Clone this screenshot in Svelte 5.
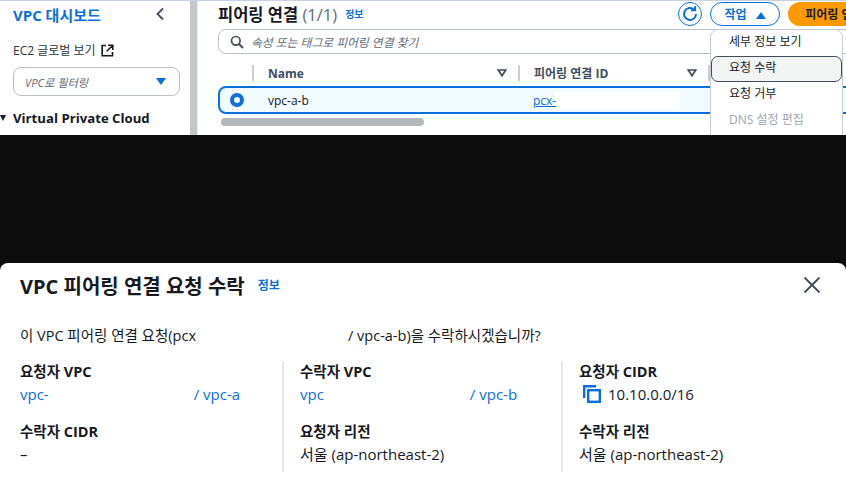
<script lang="ts">
	const modalColumns = [
		[
			{ label: '요청자 VPC', link: 'vpc-', tail: '/ vpc-a', gap: 145 },
			{ label: '수락자 CIDR', value: '–' }
		],
		[
			{ label: '수락자 VPC', link: 'vpc', tail: '/ vpc-b', gap: 146 },
			{ label: '요청자 리전', value: '서울 (ap-northeast-2)' }
		],
		[
			{ label: '요청자 CIDR', value: '10.10.0.0/16', copy: true },
			{ label: '수락자 리전', value: '서울 (ap-northeast-2)' }
		]
	];
</script>

<div class="page">
	<div class="console">
		<aside class="sidebar">
			<div class="side-head">
				<span class="side-title">VPC 대시보드</span>
				<svg class="chevron" width="12" height="14" viewBox="0 0 12 14"><path d="M9 1.5 3.5 7 9 12.5" fill="none" stroke="#414d5c" stroke-width="1.8"/></svg>
			</div>
			<div class="side-link">
				EC2 글로벌 보기
				<svg width="13" height="13" viewBox="0 0 13 13"><path d="M5 1.5H1.2v10.3h10.3V8M7 1.2h4.8V6M11.5 1.5 5.8 7.2" fill="none" stroke="#16191f" stroke-width="1.6"/></svg>
			</div>
			<div class="side-filter">
				<span>VPC로 필터링</span>
				<i class="caret"></i>
			</div>
			<div class="side-group"><i class="group-caret"></i>Virtual Private Cloud</div>
		</aside>
		<div class="divider"></div>
		<main class="content">
			<div class="toolbar">
				<h2>피어링 연결 <span class="count">(1/1)</span></h2>
				<a class="info" href="#info">정보</a>
				<div class="actions">
					<button class="refresh" aria-label="새로 고침">
						<svg width="18" height="18" viewBox="0 0 18 18"><path d="M15 9a6 6 0 1 1-2-4.5" fill="none" stroke="#0a6fdc" stroke-width="2"/><path d="M14 1.2v4H10" fill="none" stroke="#0a6fdc" stroke-width="2"/></svg>
					</button>
					<button class="action">작업 <i class="up"></i></button>
					<button class="create">피어링 연결 생성</button>
				</div>
			</div>
			<div class="search">
				<svg width="14" height="14" viewBox="0 0 14 14"><circle cx="5.8" cy="5.8" r="4.3" fill="none" stroke="#414d5c" stroke-width="1.7"/><path d="m9 9 4 4" stroke="#414d5c" stroke-width="1.9"/></svg>
				<span>속성 또는 태그로 피어링 연결 찾기</span>
			</div>
			<div class="thead">
				<span class="sep first"></span>
				<span class="th name">Name</span>
				<svg class="sort" width="10" height="8" viewBox="0 0 10 8"><path d="M1.2 1h7.6L5 6.8z" fill="#e9ebed" stroke="#414d5c" stroke-width="1.6"/></svg>
				<span class="sep"></span>
				<span class="th pid">피어링 연결 ID</span>
				<svg class="sort" width="10" height="8" viewBox="0 0 10 8"><path d="M1.2 1h7.6L5 6.8z" fill="#e9ebed" stroke="#414d5c" stroke-width="1.6"/></svg>
				<span class="sep"></span>
			</div>
			<div class="row">
				<span class="radio"></span>
				<span class="cell-name">vpc-a-b</span>
				<a class="cell-id" href="#pcx">pcx-</a>
			</div>
			<div class="scroll"><div class="thumb"></div></div>
			<ul class="menu">
				<li>세부 정보 보기</li>
				<li class="hover">요청 수락</li>
				<li>요청 거부</li>
				<li class="off">DNS 설정 편집</li>
			</ul>
		</main>
	</div>

	<div class="band"></div>

	<section class="modal">
		<header class="modal-head">
			<h1>VPC 피어링 연결 요청 수락</h1>
			<a class="info" href="#info">정보</a>
			<svg class="close" width="20" height="20" viewBox="0 0 20 20"><path d="m2.5 2.5 15 15m0-15-15 15" stroke="#414d5c" stroke-width="1.8"/></svg>
		</header>
		<p class="question">이 VPC 피어링 연결 요청(pcx<span class="hidden-id"></span>/ vpc-a-b)을 수락하시겠습니까?</p>
		<div class="columns">
			{#each modalColumns as column}
				<div class="column">
					{#each column as item}
						<div class="field">
							<div class="label">{item.label}</div>
							{#if item.link}
								<div class="value link">{item.link}<span style="width: {item.gap}px" class="blank"></span>{item.tail}</div>
							{:else}
								<div class="value">
									{#if item.copy}
										<svg class="copy" width="18" height="18" viewBox="0 0 18 18"><path d="M1.2 13V1.2H13" fill="none" stroke="#0a6fdc" stroke-width="2.4"/><rect x="5.2" y="5.2" width="11.6" height="11.6" fill="none" stroke="#0a6fdc" stroke-width="2.4"/></svg>
									{/if}
									{item.value}
								</div>
							{/if}
						</div>
					{/each}
				</div>
			{/each}
		</div>
	</section>
</div>

<style>
	:global(body) {
		margin: 0;
		background: #0c0c0c;
	}

	.page {
		width: 846px;
		height: 480px;
		overflow: hidden;
		display: flex;
		flex-direction: column;
		font-family: 'Open Sans', 'Noto Sans CJK KR', sans-serif;
		color: #16191f;
	}

	.console {
		height: 135px;
		flex-shrink: 0;
		display: flex;
		background: #fff;
		border-top: 1px solid #c6d3e6;
		box-sizing: border-box;
		overflow: hidden;
	}

	.sidebar {
		width: 190px;
		flex-shrink: 0;
		box-sizing: border-box;
		padding: 2px 0 0 13px;
	}

	.side-head {
		display: flex;
		align-items: center;
		justify-content: space-between;
		padding-right: 24px;
		height: 22px;
	}

	.side-title {
		font-size: 15px;
		font-weight: 700;
		color: #0a6fdc;
	}

	.side-link {
		display: flex;
		align-items: center;
		gap: 5px;
		margin-top: 16px;
		font-size: 12px;
		height: 18px;
		color: #2b3440;
	}

	.side-filter {
		box-sizing: border-box;
		width: 167px;
		height: 29px;
		margin-top: 8px;
		border: 1px solid #b8bec6;
		border-radius: 8px;
		display: flex;
		align-items: center;
		justify-content: space-between;
		padding: 0 13px 0 11px;
		font-size: 11.2px;
		font-style: italic;
		color: #5f6b7a;
	}

	.caret {
		width: 0;
		height: 0;
		border-left: 5px solid transparent;
		border-right: 5px solid transparent;
		border-top: 7px solid #0a6fdc;
	}

	.side-group {
		display: flex;
		align-items: center;
		margin: 13px 0 0 -13px;
		font-size: 13.2px;
		font-weight: 700;
		white-space: nowrap;
	}

	.group-caret {
		width: 0;
		height: 0;
		border-left: 3px solid transparent;
		border-right: 3px solid transparent;
		border-top: 6px solid #16191f;
		margin-right: 7px;
	}

	.divider {
		width: 7px;
		flex-shrink: 0;
		background: #c4c7c9;
	}

	.content {
		position: relative;
		flex: 1;
		min-width: 0;
		box-sizing: border-box;
		padding-left: 20px;
		border-left: 1px solid #eaeded;
		overflow: hidden;
	}

	.toolbar {
		display: flex;
		align-items: center;
		height: 25px;
		white-space: nowrap;
	}

	h2 {
		margin: 0;
		font-size: 16.5px;
		font-weight: 700;
	}

	.count {
		font-weight: 400;
		color: #5f6b7a;
	}

	.info {
		margin-left: 8px;
		font-size: 10px;
		font-weight: 700;
		color: #0a6fdc;
		text-decoration: none;
	}

	.actions {
		margin-left: auto;
		display: flex;
		align-items: center;
		gap: 8px;
		margin-right: -60px;
	}

	.actions button {
		font-family: inherit;
		font-size: 12px;
		font-weight: 700;
		height: 24px;
		border-radius: 12px;
		white-space: nowrap;
		padding: 0;
	}

	.actions .refresh {
		width: 24px;
		border: 1.5px solid #0a6fdc;
		background: #fff;
		display: flex;
		align-items: center;
		justify-content: center;
	}

	.action {
		width: 70px;
		border: 1.5px solid #0a6fdc;
		background: #fff;
		color: #0a6fdc;
	}

	.up {
		display: inline-block;
		margin-left: 6px;
		width: 0;
		height: 0;
		border-left: 5px solid transparent;
		border-right: 5px solid transparent;
		border-bottom: 7px solid #0a6fdc;
	}

	.create {
		width: 118px;
		border: 0;
		background: #ff9900;
		color: #16191f;
	}

	.search {
		box-sizing: border-box;
		height: 25px;
		margin: 3px -30px 0 0;
		border: 1px solid #b8bec6;
		border-radius: 8px;
		display: flex;
		align-items: center;
		gap: 7px;
		padding-left: 11px;
		font-size: 11.8px;
		font-style: italic;
		color: #5f6b7a;
	}

	.thead {
		display: flex;
		align-items: center;
		box-sizing: border-box;
		height: 32px;
		padding-top: 6px;
		white-space: nowrap;
		font-size: 12px;
		font-weight: 700;
		color: #414d5c;
	}

	.sep {
		width: 2px;
		height: 16px;
		background: #c8cdd3;
	}

	.sep.first {
		margin-left: 34px;
	}

	.th.name {
		width: 229px;
		margin-left: 14px;
	}

	.th.pid {
		width: 153px;
		margin-left: 14px;
	}

	.sort {
		margin-right: 11px;
	}

	.row {
		box-sizing: border-box;
		height: 28px;
		margin-right: -30px;
		border: 2px solid #0a6fdc;
		border-radius: 8px 0 0 8px;
		background: #f1faff;
		display: flex;
		align-items: center;
		font-size: 12px;
		white-space: nowrap;
	}

	.radio {
		box-sizing: border-box;
		width: 14px;
		height: 14px;
		margin-left: 10px;
		border-radius: 50%;
		border: 4px solid #0a6fdc;
		background: #fff;
	}

	.cell-name {
		width: 265px;
		margin-left: 24px;
	}

	.cell-id {
		color: #0a6fdc;
		padding-right: 124px;
		background: linear-gradient(to right, transparent 22px, #fff 22px);
	}

	.scroll {
		margin: 4px 0 0 3px;
		height: 8px;
		padding-bottom: 1px;
	}

	.thumb {
		width: 203px;
		height: 8px;
		border-radius: 4px;
		background: #b4b8bc;
	}

	.menu {
		position: absolute;
		left: 512px;
		top: 28px;
		width: 133px;
		margin: 0;
		padding: 0;
		list-style: none;
		background: #fff;
		border: 1px solid #c6cbd1;
		border-radius: 8px 8px 0 0;
		font-size: 12px;
		box-sizing: border-box;
		height: 110px;
	}

	.menu li {
		box-sizing: border-box;
		height: 26px;
		line-height: 21px;
		padding-left: 17px;
		border: 1px solid transparent;
	}

	.menu .hover {
		background: #f2f3f3;
		border: 1.5px solid #414d5c;
		border-radius: 7px;
	}

	.menu .off {
		color: #9ba7b6;
	}

	.band {
		height: 128px;
		flex-shrink: 0;
		background: #0c0c0c;
	}

	.modal {
		flex: 1;
		box-sizing: border-box;
		background: #fff;
		border-radius: 8px 8px 0 0;
		padding: 0 0 0 20px;
		overflow: hidden;
	}

	.modal-head {
		display: flex;
		align-items: center;
		height: 44px;
		padding-right: 24px;
	}

	h1 {
		margin: 0;
		font-size: 20px;
		font-weight: 700;
		white-space: nowrap;
	}

	.modal-head .info {
		margin-left: 13px;
		font-size: 12px;
	}

	.close {
		margin-left: auto;
	}

	.question {
		margin: 19px 0 0;
		font-size: 14.5px;
		line-height: 20px;
		white-space: nowrap;
		color: #16191f;
	}

	.hidden-id {
		display: inline-block;
		width: 152px;
	}

	.columns {
		display: grid;
		grid-template-columns: 262px 279px 1fr;
		margin-top: 15px;
	}

	.column {
		padding-left: 16px;
		border-left: 2px solid #e3e5e8;
		height: 111px;
	}

	.column:first-child {
		padding-left: 0;
		border-left: 0;
	}

	.field {
		height: 60px;
	}

	.label {
		font-size: 14.5px;
		font-weight: 700;
		line-height: 22px;
	}

	.value {
		display: flex;
		align-items: center;
		gap: 7px;
		font-size: 15px;
		line-height: 22px;
		white-space: nowrap;
	}

	.value.link {
		gap: 0;
		color: #0a6fdc;
	}

	.copy {
		margin-left: 4px;
	}

	.blank {
		display: inline-block;
	}
</style>
